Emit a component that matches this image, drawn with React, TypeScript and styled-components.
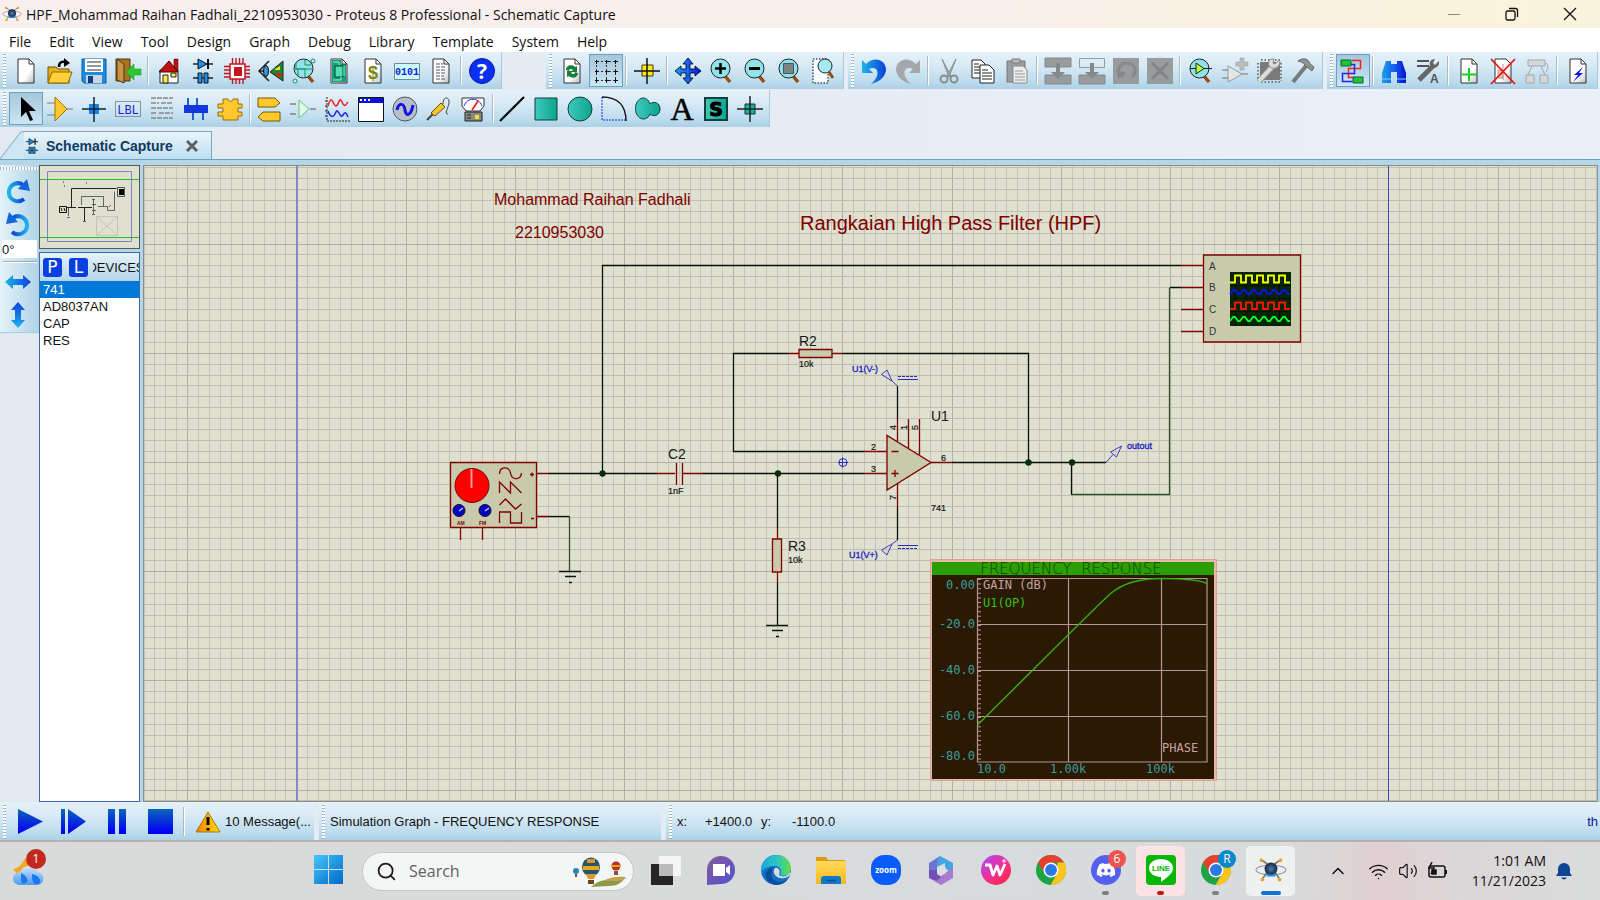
import React from "react";
import styled, { createGlobalStyle, css } from "styled-components";
import { Search, Wifi, Volume2, ChevronUp } from "lucide-react";
import { FaDiscord } from "react-icons/fa";

const ui = `"Open Sans", "Noto Sans", sans-serif`;
const arial = `"Liberation Sans", Arial, sans-serif`;
const mono = `"DejaVu Sans Mono", monospace`;
const bar = "linear-gradient(#e4f1f9 0%, #d9eaf5 35%, #bcdcee 80%, #acd0e4 100%)";

const Global = createGlobalStyle`
  * { box-sizing: border-box; }
  body { margin: 0; overflow: hidden; background: #e4ebf2; }
  button, input { font: inherit; color: inherit; margin: 0; padding: 0; border: 0; background: none; }
  ul { list-style: none; margin: 0; padding: 0; }
`;

const Window = styled.div`
  display: flex;
  flex-direction: column;
  height: 100vh;
  font: 14px ${ui};
  color: #111;
`;
const TitleBar = styled.header`
  display: flex;
  align-items: center;
  flex: none;
  height: 28px;
  padding: 0 1px 0 2px;
  gap: 4px;
  background: linear-gradient(90deg, #f9efef 0%, #f9efec 60%, #faf2de 85%, #faf3dc 100%);
`;
const Title = styled.h1`
  flex: 1;
  margin: 0;
  padding-top: 2px;
  font: 14px/26px ${ui};
  white-space: nowrap;
`;
const Controls = styled.div`
  display: flex;
`;
const WindowButton = styled.button`
  display: grid;
  place-items: center;
  width: 58px;
  height: 28px;
`;
const MenuBar = styled.nav`
  display: flex;
  flex: none;
  height: 24px;
  padding: 2px 9px 0;
  gap: 18px;
  background: #fff;
  line-height: 24px;
`;
const MenuItem = styled.button`
  height: 22px;
  white-space: nowrap;
  font-size: 14px;
`;
const ToolRow = styled.div`
  display: flex;
  flex: none;
  height: 38px;
  padding-bottom: 1px;
  gap: 4px;
  background: linear-gradient(90deg, #e2e9f0, #e9f0f8);
`;
const ToolGroup = styled.div<{ $gap?: number }>`
  display: flex;
  align-items: center;
  height: 37px;
  padding-right: 2px;
  margin-right: ${(p) => p.$gap ?? 0}px;
  background: ${bar};
  border-right: 1px solid #a9cbdf;
`;
const Grip = styled.span<{ $flat?: boolean }>`
  flex: none;
  ${(p) =>
    p.$flat
      ? css`
          width: 38px;
          height: 3px;
          margin-bottom: 4px;
          background: repeating-linear-gradient(90deg, #9db4c4 0 1px, #fff 1px 3px);
        `
      : css`
          width: 3px;
          height: 34px;
          margin: 0 3px;
          background: repeating-linear-gradient(#9db4c4 0 1px, #fff 1px 3px);
        `}
`;
const ToolButton = styled.button<{ $on?: boolean }>`
  display: grid;
  place-items: center;
  flex: none;
  width: 34px;
  height: 33px;
  ${(p) =>
    p.$on &&
    css`
      background: linear-gradient(#a5c6da, #bcd9e9 60%, #cfe7f4);
      box-shadow: inset 0 0 0 1px #6c9fc0;
    `}
`;
const Divider = styled.span<{ $thin?: boolean }>`
  flex: none;
  width: 2px;
  height: 29px;
  margin: 0 ${(p) => (p.$thin ? 1 : 3)}px 0 2px;
  background: linear-gradient(90deg, #b3b8bc 50%, #fff 50%);
`;
const TabRow = styled.div`
  display: flex;
  align-items: flex-end;
  flex: none;
  height: 32px;
  background: linear-gradient(90deg, #e2e9f0, #e9f0f8);
  border-bottom: 1px solid #6ba3c5;
`;
const Tab = styled.div`
  display: flex;
  align-items: center;
  height: 28px;
  padding-right: 12px;
  gap: 6px;
  background: linear-gradient(#e8f4fb, #bfdff1);
  border-top: 1px solid #77a9c8;
  border-right: 1px solid #77a9c8;
  font: bold 14px ${arial};
  color: #14385e;
`;
const TabClose = styled.button`
  display: grid;
  margin-left: 6px;
`;
const Work = styled.div`
  display: flex;
  flex: 1;
  min-height: 0;
  padding: 5px 2px 0 0;
  background: #b4d6e9;
`;
const LeftRail = styled.div`
  display: flex;
  flex: none;
  width: 39px;
  flex-direction: column;
  background: #e2e9f1;
`;
const RailTools = styled.div`
  display: flex;
  flex-direction: column;
  align-items: flex-start;
  height: 168px;
  padding-top: 2px;
  background: linear-gradient(90deg, #e4f2fa, #b0d3e7);
  border-bottom: 1px solid #a9cbdf;
`;
const RailButton = styled.button`
  display: grid;
  place-items: center;
  width: 36px;
  height: 33px;
`;
const Angle = styled.input`
  width: 35px;
  height: 18px;
  margin: 0 0 3px 2px;
  background: #fff;
  font: 13px ${arial};
`;
const RailLine = styled.hr`
  width: 34px;
  margin: 0 0 2px 3px;
  border: 0;
  border-top: 1px solid #a0a8ae;
  border-bottom: 1px solid #fff;
`;
const Side = styled.aside`
  display: flex;
  flex: none;
  flex-direction: column;
  width: 101px;
  margin-right: 3px;
  gap: 3px;
`;
const Overview = styled.div`
  height: 84px;
  border: 1px solid #555;
  background: #dfe0d0;
  svg { display: block; }
`;
const Devices = styled.section`
  display: flex;
  flex: 1;
  flex-direction: column;
  border: 1px solid #3b6aa8;
  background: #fff;
  font: 13px ${arial};
`;
const DevicesHead = styled.header`
  display: flex;
  align-items: center;
  flex: none;
  height: 28px;
  padding-left: 3px;
  gap: 7px;
  background: linear-gradient(#e6f2fa, #b4d6ea);
`;
const Badge = styled.button`
  flex: none;
  width: 19px;
  height: 19px;
  border-radius: 3px;
  background: #0b3fe0;
  color: #fff;
  font: 17px/19px "DejaVu Sans", sans-serif;
`;
const DevicesTitle = styled.h2`
  display: flex;
  justify-content: center;
  flex: 1;
  min-width: 0;
  margin: 0 0 0 -2px;
  overflow: hidden;
  font: 13px ${arial};
`;
const Device = styled.button<{ $on?: boolean }>`
  display: block;
  width: 100%;
  height: 17px;
  padding-left: 3px;
  text-align: left;
  line-height: 17px;
  background: ${(p) => (p.$on ? "#0078d7" : "transparent")};
  color: ${(p) => (p.$on ? "#fff" : "#111")};
`;
const Canvas = styled.main`
  flex: 1;
  min-width: 0;
  overflow: hidden;
  background: #dfe0d0;
  border: 1px solid #8b8c86;
  border-right-color: #7f98a8;
  svg { display: block; }
`;
const Status = styled.footer`
  display: flex;
  flex: none;
  height: 40px;
  padding-top: 1px;
  background: ${bar};
  border-bottom: 2px solid #b2b0b0;
  font: 13px ${arial};
  white-space: nowrap;
`;
const StatusGroup = styled.div<{ $width?: number }>`
  display: flex;
  align-items: center;
  ${(p) => (p.$width ? `flex: none; width: ${p.$width}px; border-right: 5px solid #e2ecf3;` : "flex: 1; min-width: 0;")}
`;
const PlayButton = styled.button`
  display: grid;
  place-items: center;
  width: 43px;
`;
const Warning = styled.svg`
  flex: none;
  margin-left: 3px;
`;
const StatusText = styled.span<{ $width?: number }>`
  margin-left: 2px;
  width: ${(p) => (p.$width ? `${p.$width}px` : "auto")};
`;
const StatusUnit = styled.span`
  margin: 0 2px 0 auto;
  color: #10109a;
`;
const Taskbar = styled.nav`
  display: flex;
  align-items: center;
  flex: none;
  height: 58px;
  padding-right: 18px;
  background: linear-gradient(90deg, #d9dada 0%, #d8dbdc 80%, #dcd5d6 84%, #e2cfd2 86%, #dcd6d7 90%, #d9dcdb 100%);
`;
const Weather = styled.button`
  display: grid;
  place-items: center;
  width: 56px;
  height: 44px;
  margin-right: auto;
`;
const Apps = styled.div`
  display: flex;
  align-items: center;
  margin-right: 15px;
`;
const AppButton = styled.button<{ $tint?: string }>`
  display: flex;
  flex-direction: column;
  align-items: center;
  width: 49px;
  height: 50px;
  padding-top: 8px;
  margin: 0 3px;
  border-radius: 5px;
  background: ${(p) => p.$tint ?? "transparent"};
`;
const Running = styled.i<{ $color: string; $width: number }>`
  width: ${(p) => p.$width}px;
  height: 4px;
  margin-top: 5px;
  border-radius: 2px;
  background: ${(p) => p.$color};
`;
const SearchBox = styled.label`
  display: flex;
  align-items: center;
  width: 272px;
  height: 39px;
  margin: 0 4px 0 6px;
  padding: 0 4px 0 13px;
  gap: 12px;
  border: 1px solid #c4c5c5;
  border-radius: 20px;
  background: #f4f5f5;
  input { flex: 1; min-width: 0; font-size: 16px; outline: 0; }
  input::placeholder { color: #606264; opacity: 1; }
`;
const TrayButton = styled.button<{ $width?: number }>`
  display: grid;
  place-items: center;
  width: ${(p) => p.$width ?? 30}px;
  height: 40px;
`;
const Clock = styled.button`
  width: 93px;
  text-align: right;
  font: 14px/20px ${ui};
`;

/* ---------- toolbar icons, drawn on a 26 x 26 field ---------- */
const page = (
  <path d="M5 1h11l5 5v19H5z" fill="url(#paper)" stroke="#333" />
);
const fold = <path d="M16 1v5h5" fill="none" stroke="#333" />;
const lens = (
  <>
    <path d="M16 18l5 6" stroke="#9a4a10" strokeWidth="3.5" />
    <circle cx="11.500" cy="10.500" r="9.500" fill="#8fe3ea" stroke="#222" />
  </>
);
const block = "#999c9d";
const icons: Record<string, React.ReactNode> = {
  new: <>{page}{fold}</>,
  open: <><path d="M1 9h8l2 2h11v14H1z" fill="#eab01d" stroke="#6b5000" /><path d="M5 14h20l-4 11H1z" fill="#ffd23b" stroke="#8a6a00" /><path d="M12 9c0-5 3-6 7-5" fill="none" stroke="#000" strokeWidth="2.500" /><path d="M17 0l6 5-6 4z" fill="#000" /></>,
  save: <><path d="M1 1h24v24H3l-2-2z" fill="#1e8be0" stroke="#0b5da8" /><path d="M4 1h18v13H4z" fill="#fff" /><path d="M6 4h14M6 8h14M6 12h14" stroke="#234" strokeWidth="1.200" /><path d="M5 17h16v8H5z" fill="#ccd5dc" /><path d="M7 18h5v7H7z" fill="#123d8c" /></>,
  exit: <><path d="M1 1h14v22H1z" fill="#a87425" stroke="#4d350c" /><path d="M2 1l7 5v19l-7-3z" fill="#c99443" stroke="#4d350c" /><path d="M11 14l8-8v5h7v6h-7v5z" fill="#2ec52e" stroke="#159015" strokeWidth=".5" /></>,
  house: <><path d="M18 1h4v11h-4z" fill="#c01010" stroke="#400" strokeWidth=".5" /><path d="M4 12h18v13H4z" fill="#fff" stroke="#222" /><path d="M3 14L13 3l9 11z" fill="#c01010" stroke="#400" /><path d="M7 17h5v8H7z" fill="#ffe94a" stroke="#222" /><path d="M15 15h5v4h-5z" fill="#ffe94a" stroke="#222" /></>,
  schem: <><path d="M3 6h20M3 20h20" stroke="#222" strokeWidth="1.500" /><path d="M8 1v10l9-5z" fill="#1b8fe6" stroke="#111" /><path d="M18 1v10" stroke="#111" strokeWidth="2" /><path d="M8 15h4v10H8zM14 15h4v10h-4z" fill="#1b8fe6" stroke="#111" /></>,
  chip: <><path d="M8.500 0v26M12 0v26M15.500 0v26M19 0v26M0 8.500h26M0 12h26M0 15.500h26M0 19h26" stroke="#c4161c" strokeWidth="1.400" /><path d="M6 6h15v15H6z" fill="#fff" stroke="#c4161c" strokeWidth="1.500" /><path d="M10 9h8v9h-8z" fill="#c4161c" /></>,
  eye: <><path d="M11 3L1 13l10 10M2 13h7" fill="none" stroke="#222" strokeWidth="1.500" /><ellipse cx="8" cy="13" rx="2.500" ry="5.500" fill="#3b90d8" stroke="#111" /><path d="M25 3v20L12 14z" fill="#138a38" stroke="#222" /><path d="M16 12l6-4v4z" fill="#ffdf1c" /><path d="M16 15l7 0v5z" fill="#e51515" /></>,
  gerber: <>{lens}<path d="M4 5v6h9v8M2 11h18M13 2v5h6M6 12v6" fill="none" stroke="#1b8d67" /><circle cx="3" cy="23" r="2" fill="#bff" stroke="#178a60" /><circle cx="21" cy="3" r="2" fill="#bff" stroke="#178a60" /></>,
  pcb: <>{page}<path d="M6 2h9v4h5v18H6z" fill="#16a07a" /><path d="M9 8h8v11H9z" fill="#4fe0ae" stroke="#043" /><path d="M7 4h6v3M7 22h8v-3M18 8v10" fill="none" stroke="#8ff5d2" />{fold}</>,
  bom: <>{page}{fold}<text x="13" y="21" textAnchor="middle" fontFamily="Liberation Sans" fontWeight="bold" fontSize="18" fill="#7d8410">$</text></>,
  bits: <><path d="M.5 5.500h25v16H.5z" fill="#c9fbff" stroke="#789" /><text x="1" y="17" fontFamily="Liberation Mono" fontWeight="bold" fontSize="10" fill="#1624dd">0101</text></>,
  doc: <>{page}{fold}<path d="M8 6h7M8 9h10M8 12h9M8 15h10M8 18h8M8 21h10" stroke="#556" strokeDasharray="4 1" /></>,
  help: <><circle cx="13" cy="13" r="12.500" fill="#0a2ff0" stroke="#0618a8" /><text x="13" y="21" textAnchor="middle" fontFamily="Open Sans" fontWeight="bold" fontSize="21" fill="#fff">?</text></>,
  refresh: <>{page}{fold}<path d="M7 12c0-5 6-6 9-3l2-1v6h-6l2-2c-2-2-4-1-4 1zM19 15c0 5-6 6-9 3l-2 1v-6h6l-2 2c2 2 4 1 4-1z" fill="#14803a" /></>,
  grid: <><path d="M4 3.500h19M4 13.500h19M4 22.500h19M3.500 3v20M13.500 3v20M22.500 3v20" stroke="#333" strokeDasharray="2 2" /><path d="M2 3.500h4M12 3.500h4M21 3.500h4M2 13.500h4M12 13.500h4M21 13.500h4M2 22.500h4M12 22.500h4M21 22.500h4M3.500 2v4M13.500 2v4M22.500 2v4M3.500 12v4M13.500 12v4M22.500 12v4M3.500 21v4M13.500 21v4M22.500 21v4" stroke="#111" /></>,
  origin: <><path d="M8 7h11v11H8z" fill="#ffe81a" stroke="#443c00" /><path d="M13 0v26M0 13h26" stroke="#111" strokeWidth="1.500" /></>,
  pan: <path d="M13 0l5 6h-3v5h5V8l6 5-6 5v-3h-5v5h3l-5 6-5-6h3v-5H6v3l-6-5 6-5v3h5V6H8z" fill="url(#blue)" stroke="#001" strokeWidth=".8" />,
  zin: <>{lens}<path d="M11.500 5v11M6 10.500h11" stroke="#000" strokeWidth="2.500" /></>,
  zout: <>{lens}<path d="M6 10.500h11" stroke="#000" strokeWidth="3" /></>,
  zall: <>{lens}<path d="M6.500 5.500h10v10h-10z" fill="#808384" stroke="#456" /></>,
  zarea: <><path d="M2 1h15v24H2z" fill="#f8fcff" stroke="#000" strokeDasharray="1.500 1.500" /><path d="M18 14l4 6" stroke="#9a4a10" strokeWidth="3" /><circle cx="14" cy="8" r="7" fill="#a6e9ef" stroke="#222" /></>,
  undo: <path d="M1 2v13h11L8 11c6-3 10 1 8 7-1 3-3 5-6 8 9-2 15-8 15-15C24 1 13-2 5 6z" fill="url(#undo)" />,
  redo: <path d="M25 2v13H14l4-4c-6-3-10 1-8 7 1 3 3 5 6 8C7 24 1 18 1 11 2 1 13-2 21 6z" fill="#a5a8aa" />,
  cut: <g stroke="#8b8e90" fill="#b9bcbd"><path d="M6 1l9 17-2 1zM20 1l-9 17 2 1z" /><circle cx="8" cy="21" r="3.500" fill="none" strokeWidth="2" /><circle cx="18" cy="21" r="3.500" fill="none" strokeWidth="2" /></g>,
  copy: <g fill="#fff" stroke="#222"><path d="M2 2h9l4 4v14H2z" /><path d="M10 7h9l5 5v13H10z" /><path d="M4 6h5M4 9h6M4 12h6M4 15h6M12 12h6M12 15h10M12 18h10M12 21h10" strokeWidth="1.200" /></g>,
  paste: <><path d="M3 3h18v21H3z" fill="#9b9ea0" stroke="#777" /><path d="M8 1h8v4H8z" fill="#bbb" stroke="#777" /><path d="M9 8h10l4 4v13H9z" fill="#eee" stroke="#888" /><path d="M11 13h8M11 16h10M11 19h10M11 22h10" stroke="#999" /></>,
  bcopy: <><path d="M0 0h26v9H0zM0 17h26v9H0z" fill={block} stroke="#868a8c" /><path d="M11 5h4v9h5l-7 7-7-7h5z" fill="#85898b" /></>,
  bmove: <><path d="M.5 0.500h25v9H.5z" fill="none" stroke={block} /><path d="M0 17h26v9H0z" fill={block} stroke="#868a8c" /><path d="M11 5h4v9h5l-7 7-7-7h5z" fill="#85898b" /></>,
  brot: <><path d="M0 0h26v26H0z" fill={block} /><path d="M7 20c-4-8 0-15 7-15 8 0 11 9 5 14" fill="none" stroke="#85898b" strokeWidth="3" /><path d="M3 13l6 8 4-7z" fill="#85898b" /></>,
  bdel: <><path d="M0 0h26v26H0z" fill={block} /><path d="M5 5l16 16M21 5L5 21" stroke="#808486" strokeWidth="3" /></>,
  pick: <>{lens}<path d="M8 5v11l8-5.500z" fill="#b8ff3c" stroke="#222" /><path d="M2 10.500h6M16 10.500h8" stroke="#222" /></>,
  make: <><path d="M6 8v16l14-8z" fill="#e4e7e8" stroke="#999" /><path d="M0 12h6M0 20h6M20 16h6" stroke="#777" /><path d="M18 0h4v4h4v4h-4v4h-4V8h-4V4h4z" fill="#b9bcbd" stroke="#999" strokeWidth=".5" /></>,
  pack: <><path d="M4 4h20v18H4z" fill="#77797a" /><path d="M5 2h20M5 24h20M2 5v18M25 5v18" stroke="#777" strokeWidth="2" strokeDasharray="1.500 2" /><path d="M3 23L17 8" stroke="#999" strokeWidth="6" /><path d="M3 23L17 8" stroke="#ddd" strokeWidth="4" /><path d="M23 2l-4 4-2-1 1-4c-5-1-7 5-4 8 4 3 10 1 10-6z" fill="#ddd" stroke="#888" /></>,
  hammer: <><path d="M3 24L16 8" stroke="#77797a" strokeWidth="4" /><path d="M8 3c5-4 11-2 12 3l4 3-2 4-5-4c-2 0-2-5-9-6z" fill="#8f9394" stroke="#666" /></>,
  wires: <><path d="M12 2.500h8.500v8h-12v9h5" fill="none" stroke="#e22" strokeWidth="1.500" /><path d="M11 6.500h3.500v9h-12v8h10" fill="none" stroke="#22e" strokeWidth="1.500" /><path d="M1 2h10v6H1zM13 19h10v6H13z" fill="#22c52c" stroke="#064" /></>,
  binoc: <><path d="M5 3h5v3h6V3h5l4 12v10h-9V14h-6v11H1V15z" fill="url(#blue)" /><path d="M1 21h9M16 21h9" stroke="#8ecbf5" /></>,
  prop: <><path d="M2 3h12M2 8h12" stroke="#555" strokeWidth="2" /><path d="M4 22L19 7" stroke="#666" strokeWidth="5" /><path d="M24 3l-4 4-2-2 2-4c-5 0-7 5-4 8 4 2 9 0 8-6z" fill="#666" /><text x="15" y="25" fontFamily="Liberation Sans" fontSize="12" fontWeight="bold" fill="#555">A</text></>,
  addp: <>{page}{fold}<path d="M13 10v13M6 16.500h14" stroke="#16d21c" strokeWidth="2" /></>,
  delp: <>{page}<path d="M8 12h5v8H8zM13 6v16" fill="#e7c7b2" stroke="#b99" /><path d="M1 1l24 25M25 1L1 26" stroke="#ee1111" strokeWidth="1.800" /></>,
  tree: <g fill="#d5d8da" stroke="#a3a6a8"><path d="M4 2h17v6H4zM2 17h8v8H2zM16 17h8v8h-8z" /><path d="M8 8l-4 9M17 8l4 9M22 5c3 2 2 6 0 9" fill="none" /></g>,
  erc: <>{page}{fold}<path d="M18 9l-9 8h4l-5 7 10-9h-4z" fill="#1414e6" /></>,
  arrow: <path d="M8 1v20l5-5 4 9 3-1-4-9h7z" fill="#000" />,
  comp: <><path d="M0 7h9M0 19h9M20 13h6" stroke="#777" /><path d="M8 1v24l12-12z" fill="#ffc82e" stroke="#a87400" /></>,
  junc: <><path d="M8 8h10v10H8z" fill="#1485e0" /><path d="M13 1v25M1 13h24" stroke="#123" strokeWidth="1.500" /></>,
  lbl: <><path d="M.5 5.500h25v15H.5z" fill="none" stroke="#444" strokeDasharray="1 1" /><text x="13" y="18" textAnchor="middle" fontFamily="Liberation Mono" fontSize="12" fill="#1c1cd8">LBL</text></>,
  script: <path d="M2 2h22M2 7h8M12 7h12M2 12h22M2 17h6M10 17h14M2 22h22" stroke="#888" strokeWidth="1.500" strokeDasharray="5 1" />,
  bus: <><path d="M1 9h24v8H1z" fill="#1237e0" /><path d="M5 2v7M10 17v7M20 17v7M14 2v7" stroke="#1e62d6" strokeWidth="2" /></>,
  sub: <path d="M6 3h5c0 3 5 3 5 0h5v5h4v4h-4v4h4v4h-4v4H6v-4H1v-4h5v-4H1V8h5z" fill="#ffc82e" stroke="#9a6c00" />,
  term: <g fill="#ffc82e" stroke="#7a5800"><path d="M2 2h17l5 5-5 4H2z" /><path d="M24 16H7l-5 5 5 4h17z" /></g>,
  pin: <><path d="M0 8h6M0 18h6M20 13h6" stroke="#555" /><path d="M9 4v18l10-9z" fill="#e4f7ea" stroke="#5cc878" /></>,
  graph: <><path d="M3 1v24h23M1 5h3M1 10h3M1 15h3M1 20h3" fill="none" stroke="#222" strokeDasharray="2 1" /><path d="M4 10c4-14 5 0 8 0s3-11 6-4 4 2 6 0" fill="none" stroke="#e22" strokeWidth="1.500" /><path d="M4 15c3 8 6 6 8 1s4 8 7 3 4 0 5 2" fill="none" stroke="#22e" strokeWidth="1.500" /></>,
  win: <><path d="M.5 1.500h25v24H.5z" fill="#fff" stroke="#111" /><path d="M1 2h24v5H1z" fill="#0a14d8" /><path d="M2 4h2M6 4h2M10 4h2" stroke="#fff" strokeWidth="2" /></>,
  gen: <><circle cx="13" cy="13" r="12" fill="#b7c0ca" stroke="#556" /><path d="M5 14c2-8 7-7 8 0s6 6 8-5" fill="none" stroke="#1414e6" strokeWidth="3" /></>,
  probe: <><path d="M1 24l6-6" stroke="#444" strokeWidth="2" /><path d="M5 17L15 7l4 4L9 20z" fill="#f6c52c" stroke="#6b5000" /><path d="M17 8c0-9 7-7 6-1s-5 11-1 11" fill="none" stroke="#444" /></>,
  meter: <><path d="M2 2h22v8l-4 5H6l-4-5z" fill="#fff" stroke="#333" /><path d="M4 10c3-9 15-9 18 0" fill="none" stroke="#22e" /><path d="M12 14l6-9" stroke="#e11" strokeWidth="1.500" /><path d="M5 16h17v9H5z" fill="#888" stroke="#222" /><path d="M15 19h4v4h-4z" fill="#ffe31a" /><path d="M7 19h4M7 22h4" stroke="#222" /></>,
  line: <path d="M1 25L25 1" stroke="#000" strokeWidth="2" />,
  rect: <path d="M2 2h22v22H2z" fill="url(#teal)" stroke="#153d3a" />,
  circ: <circle cx="13" cy="13" r="12" fill="url(#teal)" stroke="#153d3a" />,
  arc: <><path d="M1 1v23h24" fill="none" stroke="#22e" strokeDasharray="2 1" /><path d="M1 1c16 0 24 9 24 24" fill="none" stroke="#111" strokeWidth="1.500" /></>,
  blob: <path d="M8 2c4 0 6 3 7 6 3-3 10-2 10 5s-7 8-10 5c-1 3-3 5-7 5C-2 22-2 3 8 2z" fill="url(#teal)" stroke="#153d3a" />,
  text: <text x="13" y="24" textAnchor="middle" fontFamily="Liberation Serif" fontSize="32" fill="#000" stroke="#000" strokeWidth=".5">A</text>,
  sym: <><path d="M2 2h22v22H2z" fill="url(#teal)" stroke="#153d3a" strokeWidth="2" /><text x="13" y="20" textAnchor="middle" fontFamily="DejaVu Sans" fontWeight="bold" fontSize="19" fill="#000" stroke="#000">S</text></>,
  mark: <><path d="M8 8h10v10H8z" fill="#12b59c" stroke="#133" /><path d="M13 0v26M0 13h26" stroke="#222" strokeWidth="1.500" /></>,
};

const Icon = ({ name, size = 26 }: { name: string; size?: number }) => (
  <svg width={size} height={size} viewBox="0 0 26 26" fill="none" overflow="visible" aria-hidden="true">{icons[name]}</svg>
);

const Hidden = styled.svg`
  position: absolute;
`;
const Defs = () => (
  <Hidden width="0" height="0" aria-hidden="true">
    <defs>
      <linearGradient id="paper" x1="0" y1="0" x2="1" y2="1"><stop offset=".6" stopColor="#fff" /><stop offset="1" stopColor="#b9bdbf" /></linearGradient>
      <linearGradient id="blue"><stop stopColor="#1aa0e8" /><stop offset=".5" stopColor="#1460f0" /><stop offset="1" stopColor="#0a10d0" /></linearGradient>
      <linearGradient id="undo"><stop stopColor="#1fb4ea" /><stop offset="1" stopColor="#0a3fd8" /></linearGradient>
      <linearGradient id="teal"><stop stopColor="#3fc9bf" /><stop offset="1" stopColor="#0aa58c" /></linearGradient>
      <linearGradient id="play" x1="0" y1="0" x2="0" y2="1"><stop stopColor="#0b66b8" /><stop offset=".9" stopColor="#0202f4" /></linearGradient>
      <linearGradient id="warn"><stop stopColor="#ff7d00" /><stop offset="1" stopColor="#ffe000" /></linearGradient>
      <linearGradient id="win11" x1="0" y1="0" x2="1" y2="1"><stop stopColor="#45c8fa" /><stop offset="1" stopColor="#0067c8" /></linearGradient>
      <linearGradient id="edge" x1="0" y1="0" x2="1" y2="0"><stop stopColor="#1aa6e0" /><stop offset=".55" stopColor="#2cc7c0" /><stop offset="1" stopColor="#66dd3c" /></linearGradient>
      <linearGradient id="folder" x1="0" y1="0" x2="0" y2="1"><stop stopColor="#ffd95c" /><stop offset="1" stopColor="#f9b91e" /></linearGradient>
      <linearGradient id="wps" x1="0" y1="0" x2="1" y2="1"><stop stopColor="#a04dff" /><stop offset=".5" stopColor="#f0309a" /><stop offset="1" stopColor="#ff2430" /></linearGradient>
      <linearGradient id="chat" x1="0" y1="0" x2="1" y2="1"><stop stopColor="#8a5a9c" /><stop offset="1" stopColor="#4b52d0" /></linearGradient>
      <linearGradient id="cloud" x1="0" y1="0" x2="0" y2="1"><stop stopColor="#d5e4fb" /><stop offset="1" stopColor="#4a9bf0" /></linearGradient>
      <radialGradient id="ball"><stop stopColor="#4f7db8" /><stop offset="1" stopColor="#16233f" /></radialGradient>
    </defs>
  </Hidden>
);

const Tools = ({ items, active, thin }: { items: string; active: string; thin?: boolean }) => (
  <>
    <Grip />
    {items.split(" ").map((n, i) =>
      n === "|" ? <Divider key={i} $thin={thin} /> : (
        <ToolButton key={i} $on={n === active} aria-label={n}><Icon name={n} /></ToolButton>
      ),
    )}
  </>
);

const Atom = ({ size }: { size: number }) => (
  <svg width={size} height={size} viewBox="0 0 30 30" aria-hidden="true">
    <ellipse cx="15" cy="15" rx="14" ry="4.500" fill="none" stroke="#8b95a3" />
    <path d="M5 5c6 3 14 11 19 20M25 5C19 8 11 16 6 25" stroke="#7d7466" strokeWidth="1.500" fill="none" />
    <circle cx="15" cy="14" r="6" fill="url(#ball)" />
    <path d="M10 17c3 3 7 3 10 0l-1 4h-8z" fill="#2f86e0" />
    <g fill="#e0a52a"><circle cx="6" cy="6" r="1.700" /><circle cx="24" cy="6" r="1.700" /><circle cx="7" cy="24" r="1.700" /><circle cx="23" cy="24" r="1.700" /></g>
  </svg>
);

/* ---------- schematic ---------- */
const steps = (from: number, to: number, origin: number) => {
  const out: { at: number; major: boolean }[] = [];
  const first = Math.ceil((from - origin) / 10.92);
  for (let k = first; origin + k * 10.92 < to; k++) out.push({ at: Math.round(origin + k * 10.92 - 0.5), major: k % 10 === 0 });
  return out;
};
const gridX = steps(144, 2600, 187.7);
const gridY = steps(167, 1600, 244);

const wave = (y1: number, y2: number, square: boolean) => {
  let d = `M1230 ${y2}`;
  if (square) {
    for (let i = 0; i < 5; i++) d += `H${1235 + i * 11}V${y1}h6V${y2}`;
    return d + "H1290";
  }
  for (let i = 0; i < 6; i++) d += `l3 ${y1 - y2}h2l3 ${y2 - y1}h2`;
  return d;
};

const RED = "#800000";
const Ground = ({ x, y }: { x: number; y: number }) => (
  <path d={`M${x - 11} ${y}h22M${x - 5} ${y + 5}h11M${x - 1} ${y + 11}h3`} stroke="#0a1a0a" strokeWidth="1.300" />
);

const Schematic = () => (
  <svg width="100%" height="100%" fill="none" role="img" aria-label="High pass filter schematic">
    <g transform="translate(-144 -166)">
      <g shapeRendering="crispEdges">
        {gridX.map((g) => <path key={g.at} d={`M${g.at + 0.5} 160V1600`} stroke={g.major ? "#b1b2a3" : "#c4c5b6"} />)}
        {gridY.map((g) => <path key={g.at} d={`M140 ${g.at + 0.5}H2600`} stroke={g.major ? "#afb0a1" : "#bebfb0"} />)}
        <path d="M297 160V1600" stroke="#8886c6" strokeWidth="2" />
        <path d="M1388.500 160V1600" stroke="#4444b8" />
      </g>

      <g fill={RED} fontFamily={arial}>
        <text x="494" y="205" fontSize="16">Mohammad Raihan Fadhali</text>
        <text x="515" y="238" fontSize="16">2210953030</text>
        <text x="800" y="230" fontSize="20">Rangkaian High Pass Filter (HPF)</text>
      </g>

      <g stroke="#080f08" strokeWidth="1.300">
        <path d="M549 473.500H657M602.500 473.500V265.500H1181M702 473.500H864M777.500 473.500V528M777.500 583V626" />
        <path d="M549 516.500H569.500" />
        <path d="M788 353.500H733.500V451.500H864M843 353.500H1028.500V462.500M952 462.500H1106M1071.500 462.500V495M897.500 386V419M897.500 507V540M1170 287.500H1181" />
        <path d="M569.500 516.500V571M1071.500 494.500H1169.500V287.500" stroke="#2f4f2f" />
      </g>
      <Ground x={570} y={571.5} />
      <Ground x={777} y={625.5} />

      <g stroke={RED} strokeWidth="1.300" fill="none">
        <path d="M537 473.500h12M537 516.500h12M460.500 528v12M482.500 528v12M657 473.500h18M683 473.500h19M676.500 463v22M682.500 463v22" />
        <path d="M777.500 528v55M788 353.500h55M864 451.500h23M864 473.500h23M931 462.500h21M897.500 419v22M908.500 419v29M919.500 419v36M897.500 484v23" />
        <path d="M1181 265.500h22M1181 287.500h22M1181 309.500h22M1181 331.500h22" />
        <path d="M450.500 462.500h86v65h-86zM772.500 539h9v33h-9zM799 349.500h33v8h-33zM887 435.500v54.500l44-27.500zM1203.500 255h97v87h-97z" fill="#c9c9ac" />
        <path d="M499.500 474c0-8 10-8 11-1s10 8 11 0M499.500 493v-11l11 11v-11l11 11M499.500 505l6-6 10 10 6-5M499.500 523v-11h11v11h11v-11" />
        <path d="M891.500 451.500h7M891.500 473.500h7M895 470v7M530 474.500h4M532 472.500v4M531 518.500h3" />
      </g>
      <circle cx="472" cy="485.500" r="17" fill="#ff0000" stroke="#6b1010" />
      <path d="M471.500 469v19" stroke="#ff9a9a" strokeWidth="2" />
      {[459, 485].map((x) => (
        <g key={x}>
          <circle cx={x} cy="510.500" r="6" fill="#0505c0" stroke="#101030" />
          <path d={`M${x} 511l4-3`} stroke="#b8c8ff" strokeWidth="1.500" />
        </g>
      ))}
      <g fill="#063006" stroke="#020" strokeWidth=".5">
        <circle cx="602.500" cy="473.500" r="3" /><circle cx="778" cy="473.500" r="3" />
        <circle cx="1028.500" cy="462.500" r="3" /><circle cx="1072" cy="462.500" r="3" />
      </g>

      <g fill="#181818" fontFamily={arial} fontSize="14">
        <text x="668" y="459">C2</text><text x="788" y="551">R3</text><text x="799" y="346">R2</text><text x="931" y="421">U1</text>
      </g>
      <g fill="#181818" stroke="#181818" strokeWidth=".2" fontFamily={arial} fontSize="9">
        <text x="668" y="494">1nF</text><text x="788" y="563">10k</text><text x="799" y="367">10k</text><text x="931" y="511">741</text>
        <text x="871" y="450">2</text><text x="871" y="472">3</text><text x="941" y="461">6</text>
        <text transform="translate(896 430) rotate(-90)">4</text>
        <text transform="translate(907 430) rotate(-90)">1</text>
        <text transform="translate(918 430) rotate(-90)">5</text>
        <text transform="translate(896 500) rotate(-90)">7</text>
      </g>
      <g fill="#333" fontFamily={arial} fontSize="10">
        <text x="1209" y="270">A</text><text x="1209" y="291">B</text><text x="1209" y="313">C</text><text x="1209" y="335">D</text>
      </g>
      <g fill={RED} fontFamily={arial} fontSize="5" fontWeight="bold"><text x="457" y="525">AM</text><text x="479" y="525">FM</text></g>

      <g stroke="#2a2ac0" fill="none">
        <path d="M1106 462.500l7-8M1121.500 446l-11 6 6 5zM897.500 386l-5.500-5-10.500-6.500 5.500-4.500 5 11M897.500 540l-5.500 4-10.500 6 5.500 5 5-11" strokeWidth=".9" />
        <path d="M898 379.500h20M898 545.500h20" /><path d="M898 376.500h20M898 548.500h20" strokeDasharray="3 1" />
        <circle cx="843" cy="462.500" r="4" /><path d="M838 462.500h10M842.500 457.500v10" />
      </g>
      <g fill="#1c1cc0" fontFamily={arial} fontSize="9" stroke="#1c1cc0" strokeWidth=".3">
        <text x="852" y="372">U1(V-)</text><text x="849" y="558">U1(V+)</text><text x="1127" y="449">outout</text>
      </g>

      <path d="M1230 272h61v54h-61z" fill="#052505" />
      <path d="M1235.500 272v54M1246.500 272v54M1257.500 272v54M1268.500 272v54M1279.500 272v54M1230 285.500h61M1230 298.500h61M1230 311.500h61" stroke="#001000" />
      <path d={wave(275.5, 282.5, true)} stroke="#ffff00" strokeWidth="1.800" />
      <path d={wave(290, 294, false)} stroke="#1010ff" strokeWidth="1.800" />
      <path d={wave(302.5, 309, true)} stroke="#ff1500" strokeWidth="1.800" />
      <path d={wave(317, 321, false)} stroke="#00ff20" strokeWidth="1.800" />

      <path d="M930.500 559.500h286v221h-286z" fill="#e8b8ac" stroke="#d9a399" />
      <path d="M932 562h282v217H932z" fill="#2a1a03" />
      <path d="M932 562h282v13H932z" fill="#2a9e02" />
      <g stroke="#b89494" strokeWidth="1.200">
        <path d="M977.500 578.500h229.500v183.500H977.500zM1068.500 578.500v183M1161.500 578.500v183M977.500 624.500H1207M977.500 670.500H1207M977.500 716.500H1207" />
        <path d="M979.500 579v183" strokeWidth="3" strokeDasharray="1 3.600" />
      </g>
      <path d="M977.500 725L1068.500 634.500 1100 603.500 1110 594Q1120 585.500 1133 582T1162 578.500 1192 580 1207 584.500" stroke="#36b010" strokeWidth="1.300" />
      <text x="1071" y="574" textAnchor="middle" fontFamily="DejaVu Sans" fontWeight="200" fontSize="15" fill="#124203">FREQUENCY&#160; RESPONSE</text>
      <g fontFamily={mono} fontSize="12" fill="#3f9c9c">
        <g textAnchor="end">
          <text x="975" y="589">0.00</text><text x="975" y="628">-20.0</text><text x="975" y="674">-40.0</text><text x="975" y="720">-60.0</text><text x="975" y="760">-80.0</text>
        </g>
        <text x="977" y="773">10.0</text><text x="1050" y="773">1.00k</text><text x="1146" y="773">100k</text>
        <text x="983" y="589" fill="#c8a0a0">GAIN (dB)</text>
        <text x="983" y="607" fill="#36c010">U1(OP)</text>
        <text x="1162" y="752" fill="#c8a0a0">PHASE</text>
      </g>
    </g>
  </svg>
);

const Preview = () => (
  <svg width="99" height="82" viewBox="40 167 99 82" fill="none" aria-hidden="true">
    <path d="M47.500 172.500h84v70h-84z" stroke="#8583c8" />
    <path d="M40 180.500h100M40 238.500h100" stroke="#22c022" />
    <path d="M71.500 208.500v-19h45M66 208.500h10M78 208.500h14M84.500 208v14" stroke="#222" />
    <path d="M81.500 206v-8.500h22v10M93.500 200v15M98 207.500h10M107.500 208v3.500h7v-19M68.500 209v8M92 200.500h3M92 205.500h4M92 211.500h4M92 215.500h3M83 222.500h3M67 218.500h3M109 208l2-2" stroke="#444" strokeWidth=".8" />
    <path d="M59.500 207.500h7v6h-7zM61 209l1 3M64 209l1 3" stroke="#111" />
    <path d="M117.500 188.500h7v9h-7z" stroke="#555" /><path d="M119 190h5v6h-5z" fill="#000" />
    <path d="M96.500 217.500h21v19h-21zl21 19m0-19l-21 19" stroke="#c4c5b8" />
    <path d="M63 183h1M64 187h1M86 184h1" stroke="#222" />
  </svg>
);

const Rotate = ({ flip }: { flip?: boolean }) => (
  <svg width="26" height="26" viewBox="0 0 26 26" fill="none" aria-hidden="true">
    <g transform={flip ? "matrix(-1 0 0 1 26 0)" : undefined}>
      <path d="M19 21c-6 5-16 1-15-8C5 6 13 3 18 7" stroke="url(#undo)" strokeWidth="4" />
      <path d="M22 1l3 12-12-2z" fill="#1465d8" />
    </g>
  </svg>
);
const Mirror = ({ vertical }: { vertical?: boolean }) => (
  <svg width="28" height="28" viewBox="0 0 28 28" aria-hidden="true">
    <path transform={vertical ? "rotate(-90 14 14)" : undefined} d="M1 14l8-7v4h10V7l8 7-8 7v-4H9v4z" fill="url(#undo)" />
  </svg>
);

/* ---------- taskbar pictures ---------- */
const Pic = ({ children }: { children: React.ReactNode }) => (
  <svg width="32" height="32" viewBox="0 0 32 32" fill="none" aria-hidden="true" overflow="visible">{children}</svg>
);
const chrome = (
  <>
    <circle cx="16" cy="16" r="15" fill="#1ea446" />
    <path d="M3 8.500a15 15 0 0 1 26 0H16L10 20z" fill="#e3402f" />
    <path d="M29 8.500A15 15 0 0 1 15.500 31l7-12V8.500z" fill="#fdc51b" />
    <circle cx="16" cy="16" r="7.500" fill="#fff" /><circle cx="16" cy="16" r="6" fill="#2c78e8" />
  </>
);
const count = (fill: string, label: string) => (
  <>
    <circle cx="27" cy="5" r="9" fill={fill} />
    <text x="27" y="9" textAnchor="middle" fontFamily={ui} fontSize="12" fill="#fff">{label}</text>
  </>
);
const apps: { name: string; art: React.ReactNode; tint?: string; run?: string; wide?: boolean }[] = [
  { name: "Task view", art: <><path d="M1 10h22v21H1z" fill="#252525" /><path d="M9 2h22v20H9z" fill="#fff" opacity=".72" /><path d="M9 10h14v12H9z" fill="#bbb" /></> },
  { name: "Chat", art: <><path d="M2 31V16A14 14 0 1 1 16 30z" fill="url(#chat)" /><path d="M8 10h12v12H8z" fill="#fff" /><path d="M21 14l4-3v10l-4-3z" fill="#fff" /></> },
  { name: "Edge", art: <><circle cx="16" cy="16" r="15" fill="#0f72c8" /><path d="M1 15C3-3 29-4 31 14c0 7-7 9-11 7 3-4 0-9-5-9C9 12 4 14 1 18z" fill="url(#edge)" /><path d="M12 17c-3 10 8 14 16 8-5 8-18 8-22-1-2-6 2-10 8-11-1 1-2 2-2 4z" fill="#0d4e9c" /><path d="M15 14c4-1 6 4 4 7 4 3 9 1 11-3l1 2c-2 3-7 5-11 4-5-1-8-6-5-10z" fill="#d8dadb" /></> },
  { name: "File explorer", art: <><path d="M1 3h10l2 3h17v12H1z" fill="#dc9a10" /><path d="M1 7h30v23H1z" fill="url(#folder)" /><path d="M6 30v-5q0-3 3-3h14q3 0 3 3v5z" fill="#1478c8" /><path d="M11 26.500h10" stroke="#0a4a88" strokeWidth="1.500" /></> },
  { name: "Zoom", art: <><rect x="1" y="1" width="30" height="30" rx="13" fill="#0b5cff" /><text x="16" y="19" textAnchor="middle" fontFamily={ui} fontWeight="bold" fontSize="8" fill="#fff">zoom</text></> },
  { name: "Microsoft 365", art: <><path d="M15 2L4 9v14l8 4V12l8-4z" fill="#6a76d4" /><path d="M15 2l13 7v11l-8-6V9l-8 4 1-9z" fill="#45a5e4" /><path d="M28 14v10l-12 7-12-7 8-1 8-4z" fill="#a97ad2" /><path d="M4 16v8l8 3 4-4-4-3v-4z" fill="#7250b8" /><path d="M16 11l5 3v5l-5 3-4-3v-5z" fill="#dcdfe2" /></> },
  { name: "WPS", art: <><circle cx="16" cy="16" r="15" fill="url(#wps)" /><path d="M5 11h5l3 10 4-9 3 9 5-11" stroke="#fff" strokeWidth="2.800" strokeLinejoin="round" /><path d="M24 5v4M22 7h4" stroke="#fff" /></> },
  { name: "Chrome", art: chrome },
  { name: "Discord", art: <><circle cx="16" cy="16" r="15" fill="#5360f0" /><FaDiscord x="6" y="6" size={20} color="#fff" />{count("#ee5350", "6")}</>, run: "#7d7f80" },
  { name: "LINE", art: <><rect x="1" y="1" width="30" height="30" rx="4" fill="#06b806" /><path d="M16 5c7 0 12 4 12 9 0 6-7 10-12 14v-5C9 23 4 19 4 14s5-9 12-9z" fill="#fff" /><text x="16" y="17" textAnchor="middle" fontFamily={arial} fontWeight="bold" fontSize="8" fill="#06b806">LINE</text></>, tint: "#fbe3e5", run: "#c21818" },
  { name: "Chrome profile", art: <>{chrome}{count("#0a88cc", "R")}</>, run: "#7d7f80" },
  { name: "Proteus", art: <Atom size={32} />, tint: "#eff1f1", run: "#0f72d8", wide: true },
];

export default function App() {
  return (
    <Window>
      <Global />
      <Defs />
      <TitleBar>
        <Atom size={20} />
        <Title>HPF_Mohammad Raihan Fadhali_2210953030 - Proteus 8 Professional - Schematic Capture</Title>
        <Controls>
          <WindowButton aria-label="Minimize"><svg width="14" height="14"><path d="M1 7.500h12" stroke="#888" /></svg></WindowButton>
          <WindowButton aria-label="Restore"><svg width="14" height="14" fill="none" stroke="#111" strokeWidth="1.300"><rect x="1" y="4" width="9" height="9" rx="1.500" /><path d="M4 1.500h6.500q2 0 2 2V10" /></svg></WindowButton>
          <WindowButton aria-label="Close"><svg width="14" height="14"><path d="M1 1l12 12M13 1L1 13" stroke="#111" strokeWidth="1.300" /></svg></WindowButton>
        </Controls>
      </TitleBar>
      <MenuBar>
        {["File", "Edit", "View", "Tool", "Design", "Graph", "Debug", "Library", "Template", "System", "Help"].map((m) => <MenuItem key={m}>{m}</MenuItem>)}
      </MenuBar>
      <ToolRow>
        <ToolGroup $gap={40}><Tools items="new open save exit | house schem chip eye gerber pcb bom bits doc | help" active="" /></ToolGroup>
        <ToolGroup><Tools items="refresh grid | origin | pan zin zout zall zarea" active="grid" /></ToolGroup>
        <ToolGroup><Tools items="undo redo | cut copy paste | bcopy bmove brot bdel | pick make pack hammer" active="" /></ToolGroup>
        <ToolGroup><Tools items="wires | binoc prop | addp delp tree | erc" active="wires" /></ToolGroup>
      </ToolRow>
      <ToolRow>
        <ToolGroup><Tools thin items="arrow comp junc lbl script bus sub | term pin graph win gen probe meter | line rect circ arc blob text sym mark" active="arrow" /></ToolGroup>
      </ToolRow>
      <TabRow>
        <svg width="24" height="28" aria-hidden="true"><path d="M0 28L20 2q1-1.500 4-1.500V28z" fill="#cfe6f4" /><path d="M0 28L20 2q1-1.500 4-1.500" fill="none" stroke="#77a9c8" /></svg>
        <Tab>
          <Icon name="schem" size={16} />
          Schematic Capture
          <TabClose aria-label="Close tab"><svg width="14" height="14"><path d="M2 2l10 10M12 2L2 12" stroke="#5c6064" strokeWidth="3" /></svg></TabClose>
        </Tab>
      </TabRow>
      <Work>
        <LeftRail>
          <RailTools>
            <Grip $flat />
            <RailButton aria-label="Rotate clockwise"><Rotate /></RailButton>
            <RailButton aria-label="Rotate anti-clockwise"><Rotate flip /></RailButton>
            <Angle aria-label="Angle" defaultValue="0°" />
            <RailLine />
            <RailButton aria-label="Mirror horizontally"><Mirror /></RailButton>
            <RailButton aria-label="Mirror vertically"><Mirror vertical /></RailButton>
          </RailTools>
        </LeftRail>
        <Side>
          <Overview><Preview /></Overview>
          <Devices>
            <DevicesHead><Badge>P</Badge><Badge>L</Badge><DevicesTitle>DEVICES</DevicesTitle></DevicesHead>
            <ul>{["741", "AD8037AN", "CAP", "RES"].map((d, i) => <li key={d}><Device $on={i === 0}>{d}</Device></li>)}</ul>
          </Devices>
        </Side>
        <Canvas><Schematic /></Canvas>
      </Work>
      <Status>
        <StatusGroup $width={319}>
          <Grip />
          <PlayButton aria-label="Play"><svg width="27" height="27"><path d="M1 1v25l25-12.500z" fill="url(#play)" /></svg></PlayButton>
          <PlayButton aria-label="Step"><svg width="27" height="27"><path d="M1 1h4v25H1zM8 1v25l18-12.500z" fill="url(#play)" /></svg></PlayButton>
          <PlayButton aria-label="Pause"><svg width="27" height="27"><path d="M5 1h7v25H5zM16 1h7v25h-7z" fill="url(#play)" /></svg></PlayButton>
          <PlayButton aria-label="Stop"><svg width="27" height="27"><path d="M2 1h25v25H2z" fill="url(#play)" /></svg></PlayButton>
          <Divider />
          <Warning width="32" height="24" aria-hidden="true"><path d="M17 2l12 20H5z" fill="url(#warn)" stroke="#8a6a00" strokeWidth=".8" /><path d="M17 7v8M17 18v2.500" stroke="#000" strokeWidth="3" /></Warning>
          <StatusText>10 Message(...</StatusText>
        </StatusGroup>
        <StatusGroup $width={347}><Grip /><StatusText>Simulation Graph - FREQUENCY RESPONSE</StatusText></StatusGroup>
        <StatusGroup>
          <Grip />
          <StatusText $width={26}>x:</StatusText><StatusText $width={54}>+1400.0</StatusText>
          <StatusText $width={29}>y:</StatusText><StatusText>-1100.0</StatusText>
          <StatusUnit>th</StatusUnit>
        </StatusGroup>
      </Status>
      <Taskbar>
        <Weather aria-label="Weather">
          <Pic>
            <path d="M1 14q8-1 12-11l6 8-6 9-8-1z" fill="#f6a51c" />
            <path d="M7 30a6 6 0 0 1 1-13C11 9 22 9 25 17a6 6 0 0 1 0 13z" fill="url(#cloud)" />
            <path d="M9 18q8 4 6 9-6 5-6-4zM20 19q9 2 8 9-6 4-8-4z" fill="#1c7ae8" />
            <circle cx="24" cy="4" r="10" fill="#c4281c" />
            <text x="24" y="8" textAnchor="middle" fontFamily={ui} fontSize="12" fill="#fff">1</text>
          </Pic>
        </Weather>
        <Apps>
          <AppButton aria-label="Start"><Pic><path d="M1 1h14v14H1zM16 1h14v14H16zM1 16h14v14H1zM16 16h14v14H16z" fill="url(#win11)" /></Pic></AppButton>
          <SearchBox>
            <Search size={21} color="#1b1b1b" />
            <input placeholder="Search" aria-label="Search" />
            <svg width="60" height="34" viewBox="0 0 60 34" aria-hidden="true">
              <path d="M22 33q8-8 18-7 6-4 16-3-4 9-16 9z" fill="#8a9a4a" />
              <path d="M34 27q10-6 24-3l-8 3z" fill="#c9a04c" />
              <ellipse cx="22" cy="13" rx="9" ry="9.500" fill="#1e5a6e" /><path d="M14 12h16v4H14z" fill="#f0a51c" /><path d="M18 5h8v4h-8z" fill="#e5932a" /><path d="M17 20l2 5h6l2-5z" fill="#e5932a" /><path d="M19 26h6v4h-6z" fill="#6b4522" />
              <circle cx="7" cy="17" r="3" fill="#2a86b4" /><path d="M6 20h2v3H6z" fill="#754" />
              <circle cx="47" cy="12" r="4.500" fill="#b8321e" /><path d="M43 11h8v2h-8z" fill="#f0a51c" /><path d="M45 17h4v4h-4z" fill="#853" />
            </svg>
          </SearchBox>
          {apps.map((a) => (
            <AppButton key={a.name} aria-label={a.name} $tint={a.tint}>
              <Pic>{a.art}</Pic>
              {a.run && <Running $color={a.run} $width={a.wide ? 20 : 7} />}
            </AppButton>
          ))}
        </Apps>
        <TrayButton $width={50} aria-label="Hidden icons"><ChevronUp size={20} strokeWidth={1.8} /></TrayButton>
        <TrayButton aria-label="Network"><Wifi size={21} strokeWidth={1.6} /></TrayButton>
        <TrayButton aria-label="Volume"><Volume2 size={20} strokeWidth={1.4} /></TrayButton>
        <TrayButton aria-label="Battery"><svg width="22" height="18" fill="none" stroke="#111" strokeWidth="1.500"><rect x="2" y="4" width="16" height="11" rx="2" /><path d="M19 8v4" strokeWidth="2" /><path d="M5 8h4v4H5z" fill="#111" /><path d="M5 0L2 6h5l-3 6" /></svg></TrayButton>
        <Clock>1:01 AM<br />11/21/2023</Clock>
        <TrayButton $width={36} aria-label="Notifications"><svg width="18" height="20"><path d="M1 15l2-3V8a6 6 0 0 1 12 0v4l2 3zM6 16.500h6q-3 4-6 0z" fill="#0c4593" /></svg></TrayButton>
      </Taskbar>
    </Window>
  );
}
